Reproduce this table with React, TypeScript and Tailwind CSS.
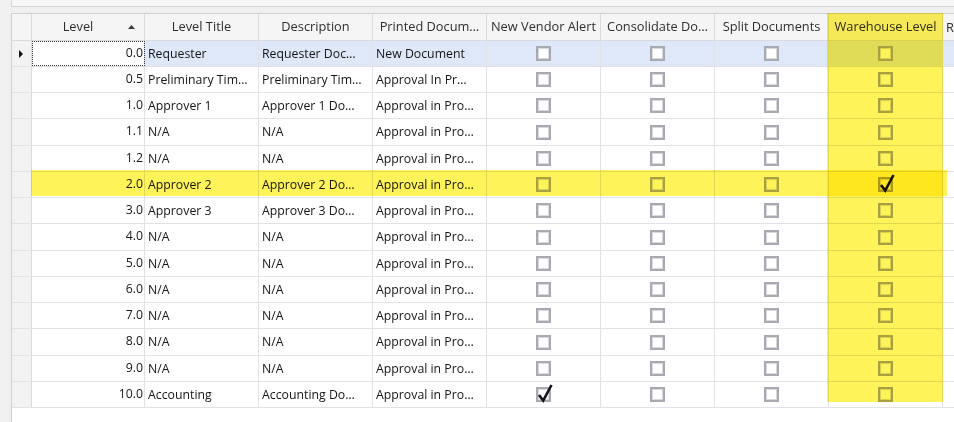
import React from "react";

type Row = {
  level: string;
  title: string;
  desc: string;
  printed: string;
  vendorAlert?: boolean;
  warehouse?: boolean;
};

const rows: Row[] = [
  { level: "0.0", title: "Requester", desc: "Requester Doc…", printed: "New Document" },
  { level: "0.5", title: "Preliminary Tim…", desc: "Preliminary Tim…", printed: "Approval In Pr…" },
  { level: "1.0", title: "Approver 1", desc: "Approver 1 Do…", printed: "Approval in Pro…" },
  { level: "1.1", title: "N/A", desc: "N/A", printed: "Approval in Pro…" },
  { level: "1.2", title: "N/A", desc: "N/A", printed: "Approval in Pro…" },
  { level: "2.0", title: "Approver 2", desc: "Approver 2 Do…", printed: "Approval in Pro…", warehouse: true },
  { level: "3.0", title: "Approver 3", desc: "Approver 3 Do…", printed: "Approval in Pro…" },
  { level: "4.0", title: "N/A", desc: "N/A", printed: "Approval in Pro…" },
  { level: "5.0", title: "N/A", desc: "N/A", printed: "Approval in Pro…" },
  { level: "6.0", title: "N/A", desc: "N/A", printed: "Approval in Pro…" },
  { level: "7.0", title: "N/A", desc: "N/A", printed: "Approval in Pro…" },
  { level: "8.0", title: "N/A", desc: "N/A", printed: "Approval in Pro…" },
  { level: "9.0", title: "N/A", desc: "N/A", printed: "Approval in Pro…" },
  { level: "10.0", title: "Accounting", desc: "Accounting Do…", printed: "Approval in Pro…", vendorAlert: true },
];

const headers = [
  "Level Title",
  "Description",
  "Printed Docum…",
  "New Vendor Alert",
  "Consolidate Do…",
  "Split Documents",
  "Warehouse Level",
];

function CheckBox({ checked }: { checked?: boolean }) {
  return (
    <span className="relative block h-[15px] w-[15px] border-2 border-[#a9a9b2] bg-white shadow-[inset_0_0_0_1px_#d8d8de]">
      {checked && (
        <svg viewBox="0 0 16 19" className="absolute left-[-1px] top-[-5px] h-[19px] w-[16px]">
          <path d="M2 11 L6.2 16.5 L14.5 1" fill="none" stroke="#15151c" strokeWidth="2.6" strokeLinejoin="miter" />
        </svg>
      )}
    </span>
  );
}

function TextCell({ children, w = "w-[114px]" }: { children: React.ReactNode; w?: string }) {
  return (
    <div className={`${w} shrink-0 overflow-hidden whitespace-nowrap border-r border-[#e2e2e6] px-[3px] leading-[25px]`}>
      {children}
    </div>
  );
}

function BoxCell({ checked }: { checked?: boolean }) {
  return (
    <div className="flex w-[114px] shrink-0 items-center justify-center border-r border-[#e2e2e6]">
      <CheckBox checked={checked} />
    </div>
  );
}

export default function App() {
  return (
    <div className="relative h-[422px] w-[954px] overflow-hidden bg-[#f0f0f0] text-[12.3px] text-[#151515] [font-family:'Open_Sans',sans-serif]">
      <div className="ml-[11px] h-[7px] border-b border-l border-[#d6d6d6] bg-[#f6f6f6]" />
      <div className="ml-[11px] mt-[6px] h-[409px] border-l border-t border-[#cfcfd4] bg-white">
        {/* header */}
        <div className="flex h-[27px] border-b border-[#dadade] bg-[#f5f5f6] text-[12.8px] text-[#2e2e2e]">
          <div className="w-[20px] shrink-0 border-r border-[#dadade]" />
          <div className="relative flex w-[113px] shrink-0 items-center justify-center border-r border-[#dadade]">
            <span className="-ml-[20px]">Level</span>
            <svg viewBox="0 0 7 4" className="absolute right-[9px] top-[11px] h-[4px] w-[7px]">
              <path d="M0 4 L3.5 0 L7 4 Z" fill="#3a3a3a" />
            </svg>
          </div>
          {headers.map((h) => (
            <div key={h} className="flex w-[114px] shrink-0 items-center justify-center overflow-hidden whitespace-nowrap border-r border-[#dadade]">
              {h}
            </div>
          ))}
          <div className="flex-1 overflow-hidden whitespace-nowrap pl-[3px] leading-[26px]">R</div>
        </div>
        {/* body */}
        {rows.map((r, i) => {
          const focused = i === 0;
          const tall = i === 3 || i === 7 || i === 11;
          return (
            <div
              key={r.level}
              className={`flex ${tall ? "h-[27px]" : "h-[26px]"} border-b border-[#e2e2e6] ${focused ? "bg-[#dfe8f8]" : "bg-white"}`}
            >
              <div className="flex w-[20px] shrink-0 items-center justify-center border-r border-[#dadade] bg-[#f3f3f4]">
                {focused && (
                  <svg viewBox="0 0 4 8" className="ml-[-2px] h-[8px] w-[4px]">
                    <path d="M0 0 L4 4 L0 8 Z" fill="#111" />
                  </svg>
                )}
              </div>
              <div
                className={`w-[113px] shrink-0 border-r border-[#e2e2e6] text-right leading-[24px] ${
                  focused ? "bg-white outline-1 -outline-offset-1 outline-dotted outline-[#333] pr-[1px]" : "pr-[1px]"
                }`}
              >
                {r.level}
              </div>
              <TextCell>{r.title}</TextCell>
              <TextCell>{r.desc}</TextCell>
              <TextCell>{r.printed}</TextCell>
              <BoxCell checked={r.vendorAlert} />
              <BoxCell />
              <BoxCell />
              <BoxCell checked={r.warehouse} />
              <div className="flex-1" />
            </div>
          );
        })}
      </div>
      {/* yellow highlight annotations */}
      <div className="pointer-events-none absolute left-[827px] top-[13px] h-[389px] w-[116px] bg-[#fff35a] mix-blend-multiply" />
      <div className="pointer-events-none absolute left-[31px] top-[170px] h-[26px] w-[916px] bg-[#fff35a] mix-blend-multiply" />
    </div>
  );
}
